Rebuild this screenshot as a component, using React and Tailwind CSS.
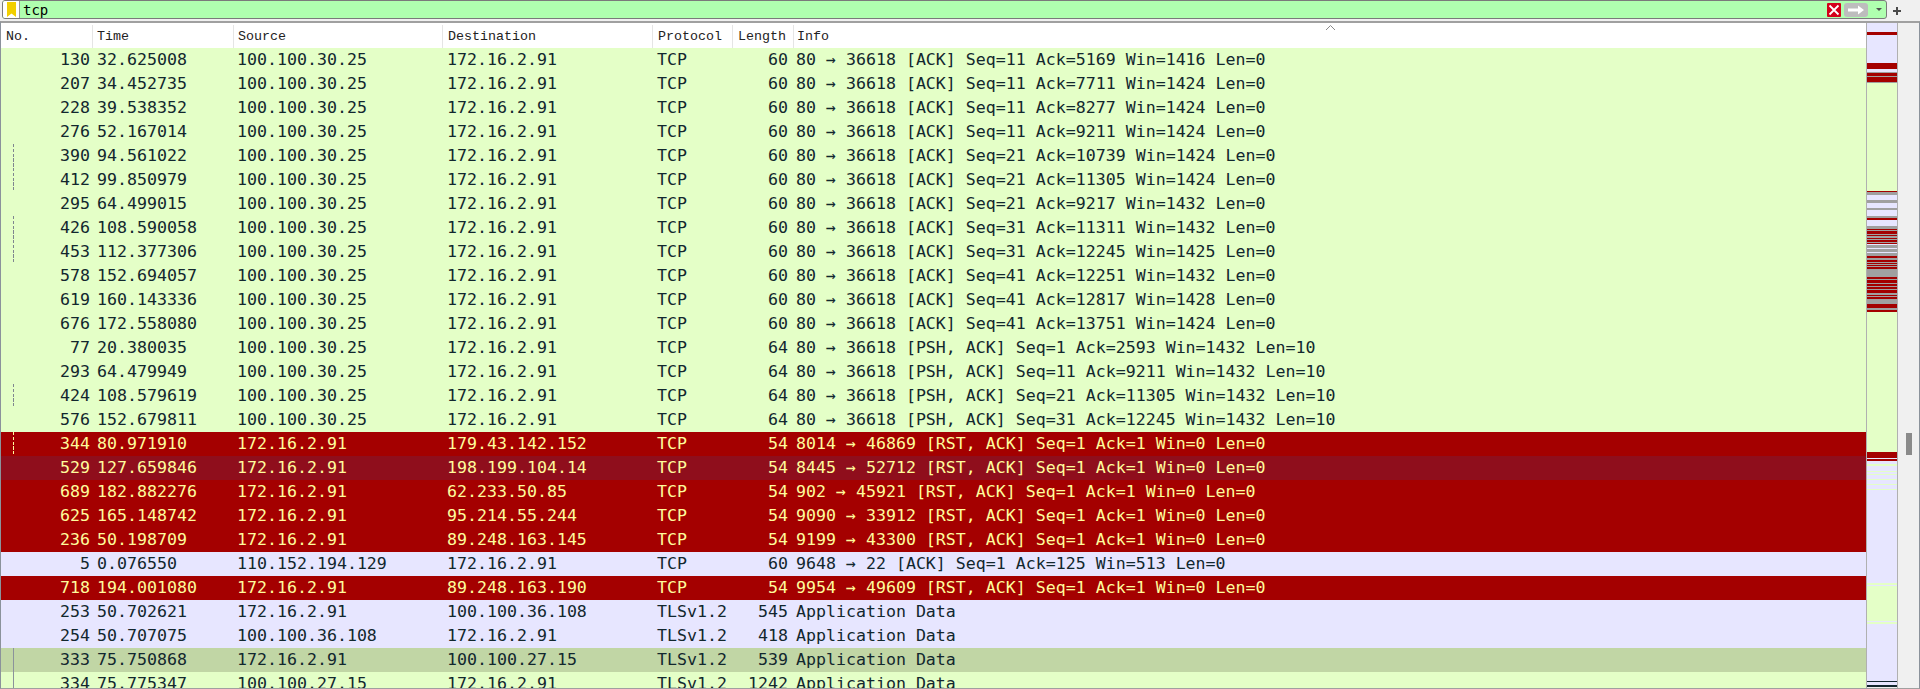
import React from "react";

const L = "100.100.30.25";
const H = "172.16.2.91";
const rows = [
  ["130","32.625008",L,H,"TCP","60","80 → 36618 [ACK] Seq=11 Ack=5169 Win=1416 Len=0","g"],
  ["207","34.452735",L,H,"TCP","60","80 → 36618 [ACK] Seq=11 Ack=7711 Win=1424 Len=0","g"],
  ["228","39.538352",L,H,"TCP","60","80 → 36618 [ACK] Seq=11 Ack=8277 Win=1424 Len=0","g"],
  ["276","52.167014",L,H,"TCP","60","80 → 36618 [ACK] Seq=11 Ack=9211 Win=1424 Len=0","g"],
  ["390","94.561022",L,H,"TCP","60","80 → 36618 [ACK] Seq=21 Ack=10739 Win=1424 Len=0","g","d"],
  ["412","99.850979",L,H,"TCP","60","80 → 36618 [ACK] Seq=21 Ack=11305 Win=1424 Len=0","g","e"],
  ["295","64.499015",L,H,"TCP","60","80 → 36618 [ACK] Seq=21 Ack=9217 Win=1432 Len=0","g"],
  ["426","108.590058",L,H,"TCP","60","80 → 36618 [ACK] Seq=31 Ack=11311 Win=1432 Len=0","g","d"],
  ["453","112.377306",L,H,"TCP","60","80 → 36618 [ACK] Seq=31 Ack=12245 Win=1425 Len=0","g","e"],
  ["578","152.694057",L,H,"TCP","60","80 → 36618 [ACK] Seq=41 Ack=12251 Win=1432 Len=0","g"],
  ["619","160.143336",L,H,"TCP","60","80 → 36618 [ACK] Seq=41 Ack=12817 Win=1428 Len=0","g"],
  ["676","172.558080",L,H,"TCP","60","80 → 36618 [ACK] Seq=41 Ack=13751 Win=1424 Len=0","g"],
  ["77","20.380035",L,H,"TCP","64","80 → 36618 [PSH, ACK] Seq=1 Ack=2593 Win=1432 Len=10","g"],
  ["293","64.479949",L,H,"TCP","64","80 → 36618 [PSH, ACK] Seq=11 Ack=9211 Win=1432 Len=10","g"],
  ["424","108.579619",L,H,"TCP","64","80 → 36618 [PSH, ACK] Seq=21 Ack=11305 Win=1432 Len=10","g","e"],
  ["576","152.679811",L,H,"TCP","64","80 → 36618 [PSH, ACK] Seq=31 Ack=12245 Win=1432 Len=10","g"],
  ["344","80.971910",H,"179.43.142.152","TCP","54","8014 → 46869 [RST, ACK] Seq=1 Ack=1 Win=0 Len=0","r","y"],
  ["529","127.659846",H,"198.199.104.14","TCP","54","8445 → 52712 [RST, ACK] Seq=1 Ack=1 Win=0 Len=0","m"],
  ["689","182.882276",H,"62.233.50.85","TCP","54","902 → 45921 [RST, ACK] Seq=1 Ack=1 Win=0 Len=0","r"],
  ["625","165.148742",H,"95.214.55.244","TCP","54","9090 → 33912 [RST, ACK] Seq=1 Ack=1 Win=0 Len=0","r"],
  ["236","50.198709",H,"89.248.163.145","TCP","54","9199 → 43300 [RST, ACK] Seq=1 Ack=1 Win=0 Len=0","r"],
  ["5","0.076550","110.152.194.129",H,"TCP","60","9648 → 22 [ACK] Seq=1 Ack=125 Win=513 Len=0","l"],
  ["718","194.001080",H,"89.248.163.190","TCP","54","9954 → 49609 [RST, ACK] Seq=1 Ack=1 Win=0 Len=0","r"],
  ["253","50.702621",H,"100.100.36.108","TLSv1.2","545","Application Data","l"],
  ["254","50.707075","100.100.36.108",H,"TLSv1.2","418","Application Data","l"],
  ["333","75.750868",H,"100.100.27.15","TLSv1.2","539","Application Data","o","s"],
  ["334","75.775347","100.100.27.15",H,"TLSv1.2","1242","Application Data","g","s"],
];

const rowStyle = {
  g: "bg-[#e4ffc7] text-[#12272e]",
  l: "bg-[#e7e6ff] text-[#12272e]",
  r: "bg-[#a40000] text-[#fffc9c]",
  m: "bg-[#8f0e1c] text-[#fffc9c]",
  o: "bg-[#c1d6a5] text-[#12272e]",
};

const markStyle = {
  d: "h-6 bg-[repeating-linear-gradient(to_bottom,#7f868f_0,#7f868f_3.4px,transparent_3.4px,transparent_4.8px)]",
  e: "h-[22px] bg-[repeating-linear-gradient(to_bottom,#7f868f_0,#7f868f_3.4px,transparent_3.4px,transparent_4.8px)]",
  y: "h-[22px] bg-[repeating-linear-gradient(to_bottom,#fffc9c_0,#fffc9c_3.4px,transparent_3.4px,transparent_4.8px)]",
  s: "h-6 bg-[#8b929b]",
};

const R = "#a40000", A = "#a0a0a0", V = "#e7e6ff", G = "#e4ffc7", D = "#12272e";
const map = [
  [V,9],[R,3],[V,28],[R,6],[V,3],[A,1],[R,3],[A,1],[R,5],[A,1],[G,108],[R,1],[A,3],[V,5],[A,3],[V,5],[A,2],[V,6],[A,2],[R,2],[V,6],[A,3],
  [R,1],[A,1],[R,3],[A,1],[R,1],[A,2],[R,1],[A,1],[R,2],[A,1],[R,1],[V,1],[A,3],[V,1],[A,3],[V,1],[A,3],[R,2],[A,2],[R,2],[A,1],[R,1],[A,1],[R,1],[A,1],[R,2],[A,8],
  [R,2],[A,1],[R,3],[A,1],[R,2],[A,1],[R,2],[A,1],[R,3],[A,2],[R,1],[A,1],[R,2],[A,5],[R,4],[A,2],[R,2],
  [G,140],[R,6],[V,1],[R,2],[V,3],[G,2],[V,5],[G,1],[V,2],[G,1],[V,4],[G,1],[V,4],[G,1],[V,4],[G,1],[V,93],[G,2],[V,1],[G,35],[V,1],[G,2],[V,57],[D,1],[V,3],[D,2],
];

const cols = [
  ["No.", "w-[92px]", "pl-[5px]"],
  ["Time", "w-[141px]", "pl-[4px]"],
  ["Source", "w-[209px]", "pl-[4px]"],
  ["Destination", "w-[210px]", "pl-[5px]"],
  ["Protocol", "w-[80px]", "pl-[5px]"],
  ["Length", "w-[61px]", "pl-[5px]"],
];

function Header() {
  return (
    <div className="relative flex h-[25px] flex-none items-center bg-white pt-[2px] font-['Liberation_Mono',monospace] text-[13.33px] text-[#222222]">
      {cols.map(([t, w, p]) => (
        <div key={t} className={`${w} ${p} flex h-full flex-none items-center border-r border-[#e5e5e5]`}>{t}</div>
      ))}
      <div className="flex-1 pl-[3px]">Info</div>
      <svg className="absolute left-[1324px] top-px" width="11" height="7" viewBox="0 0 11 7" fill="none">
        <path d="M1 6 L5.5 1.5 L10 6" stroke="#8a8a8a" strokeWidth="1" />
      </svg>
    </div>
  );
}

function Row({ r }) {
  const [no, time, src, dst, proto, len, info, kind, mark] = r;
  return (
    <div className={`flex h-6 flex-none items-start leading-6 whitespace-pre ${rowStyle[kind]}`}>
      <div className="flex h-6 w-[92px] flex-none pr-[3px]">
        <div className={`ml-[12px] w-px flex-none ${mark ? markStyle[mark] : ""}`} />
        <div className="flex-1 text-right">{no}</div>
      </div>
      <div className="w-[141px] flex-none pl-[4px]">{time}</div>
      <div className="w-[209px] flex-none pl-[3px]">{src}</div>
      <div className="w-[210px] flex-none pl-[4px]">{dst}</div>
      <div className="w-[80px] flex-none pl-[4px]">{proto}</div>
      <div className="w-[61px] flex-none pr-[6px] text-right">{len}</div>
      <div className="flex-1 pl-[2px]">{info}</div>
    </div>
  );
}

function FilterBar() {
  return (
    <div className="flex h-[21px] flex-none items-start bg-[#f0f0f0] pl-[2px]">
      <div className="flex h-[19px] w-[1885px] flex-none items-stretch overflow-hidden rounded-[3px] border border-[#7a7a7a] bg-[#afffaf]">
        <div className="flex w-[17px] flex-none items-center justify-center border-r border-[#9a9a9a] bg-white">
          <svg width="9" height="15" viewBox="0 0 9 15"><path d="M0 0H9V15L4.5 11.5L0 15Z" fill="#f2cf00" /></svg>
        </div>
        <div className="flex-1 pl-[3px] pt-px font-['DejaVu_Sans_Mono',monospace] text-[14px] leading-[17px] text-black">tcp</div>
        <div className="flex flex-none items-center pr-[4px]">
          <svg width="14" height="14" viewBox="0 0 14 14">
            <rect width="14" height="14" rx="1" fill="#d4001a" />
            <path d="M2.5 2.5L11.5 11.5M11.5 2.5L2.5 11.5" stroke="#ffffff" strokeWidth="1.8" />
          </svg>
          <svg className="ml-[3px]" width="24" height="14" viewBox="0 0 24 14">
            <rect width="24" height="14" rx="3" fill="#bdbdbd" />
            <path d="M4 5.5H14V2.5L20 7L14 11.5V8.5H4Z" fill="#ffffff" />
          </svg>
          <svg className="ml-[8px]" width="6" height="3" viewBox="0 0 6 3"><path d="M0 0H6L3 3Z" fill="#505050" /></svg>
        </div>
      </div>
      <svg className="ml-[6px] mt-[7px]" width="8" height="8" viewBox="0 0 8 8">
        <path d="M4 0V8M0 4H8" stroke="#4a4a4a" strokeWidth="2" />
      </svg>
    </div>
  );
}

export default function App() {
  return (
    <div className="flex h-[689px] w-[1920px] flex-col overflow-hidden bg-[#f0f0f0] font-['DejaVu_Sans_Mono',monospace] text-[16.6px]">
      <FilterBar />
      <div className="flex min-h-0 flex-1 border-t-2 border-b border-l border-r border-t-[#a0a0a0] border-b-[#a0a0a0] border-l-[#8b929b] border-r-[#8b929b]">
        <div className="flex w-[1865px] flex-none flex-col overflow-hidden">
          <Header />
          {rows.map((r) => <Row key={r[0]} r={r} />)}
        </div>
        <div className="flex w-[32px] flex-none flex-col overflow-hidden border-x border-[#b0b0b0]">
          {map.map(([c, h], i) => <div key={i} className="flex-none" style={{ backgroundColor: c, height: h }} />)}
        </div>
        <div className="flex flex-1 justify-center bg-[#f0f0f0] pt-[410px]">
          <div className="h-[22px] w-[6px] bg-[#8a8a8a]" />
        </div>
      </div>
    </div>
  );
}
